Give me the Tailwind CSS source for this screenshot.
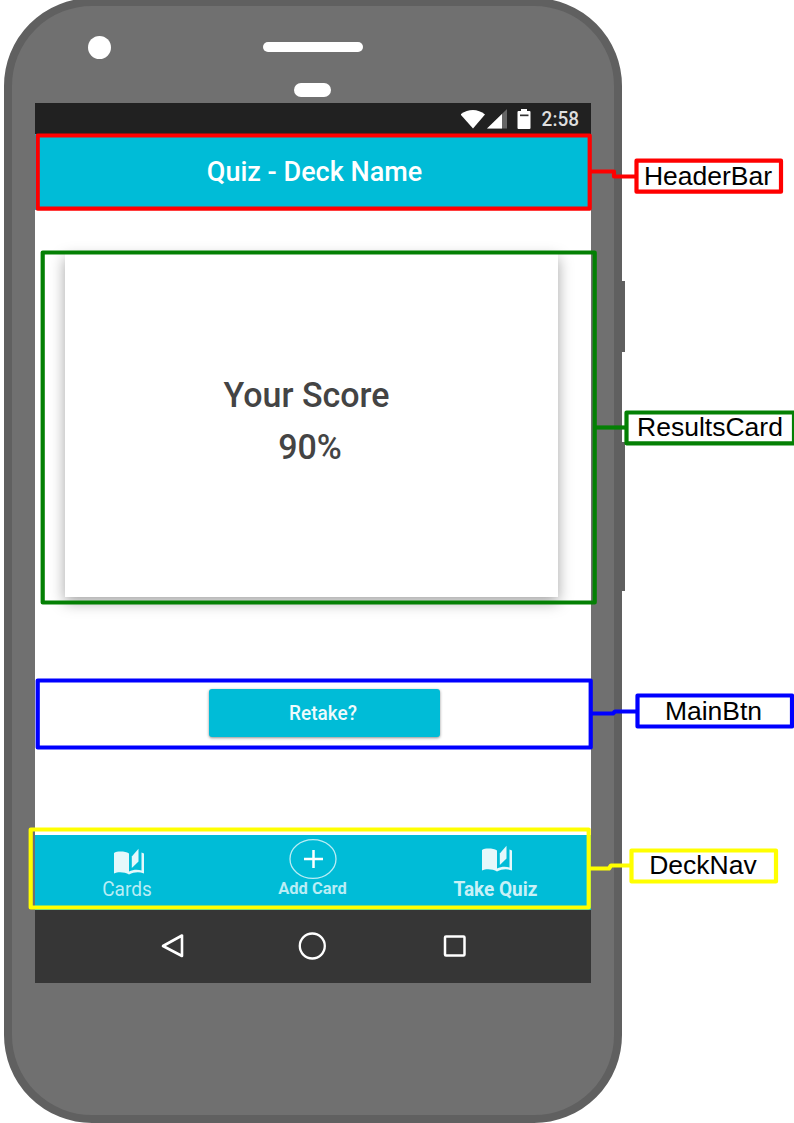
<!DOCTYPE html>
<html lang="en">
<head>
<meta charset="utf-8">
<title>Quiz results component map</title>
<script src="https://cdn.jsdelivr.net/npm/@tailwindcss/browser@4"></script>
</head>
<body class="bg-white overflow-hidden">
<main class="relative w-[794px] h-[1123px] overflow-hidden font-['Roboto',sans-serif]">
  <!-- side buttons -->
  <div class="absolute left-[610px] top-[281px] w-[15px] h-[71px] bg-[#606060]"></div>
  <div class="absolute left-[610px] top-[442px] w-[15px] h-[149px] bg-[#606060]"></div>

  <!-- phone body -->
  <section class="relative ml-1 -mt-[2px] w-[618px] h-[1125px] rounded-[88px] bg-[#707070] border-8 border-[#606060] flex flex-col">
    <div class="h-[97px] shrink-0 relative">
      <div class="absolute left-[76px] top-[30px] size-[23px] rounded-full bg-white"></div>
      <div class="absolute left-[251px] top-[36px] w-[100px] h-[10px] rounded-full bg-white"></div>
      <div class="absolute left-[282px] top-[77px] w-[37px] h-[14px] rounded-full bg-white"></div>
    </div>
    <div class="ml-[23px] w-[556px] h-[880px] bg-white flex flex-col shrink-0">
      <div class="h-[31px] bg-[#212121] flex items-center justify-end pr-[12px] shrink-0">
        <svg class="w-[80px] h-[31px] mr-px shrink-0" viewBox="0 0 80 31">
          <path d="M-.5 11.500C7 5.500 17 5.500 24 11.500L12 25.500Z" fill="#fff"/>
          <path d="M46 6V25.500H26Z" fill="#666"/>
          <path d="M41 10.900V25.500H26Z" fill="#fff"/>
          <path d="M60 6h6v2h2.500q1 0 1 1v16q0 1-1 1H57.500q-1 0-1-1V9q0-1 1-1h2.500Z" fill="#fff"/>
          <path d="M59 11.500h8.500v1.700h-8.500Z" fill="#333"/>
        </svg>
        <span class="text-[19px] leading-[31px] pt-px font-medium text-[#dedede] scale-y-105">2:58</span>
      </div>
      <header class="h-[76px] shrink-0 bg-[#00bcd7] flex items-center justify-center pl-[3px]">
        <h1 class="text-[27px] leading-[34px] font-medium text-white">Quiz - Deck Name</h1>
      </header>
      <div class="pt-[43px] pl-[30px] h-[470px] shrink-0">
        <div class="w-[493px] h-[344px] bg-white shadow-[0_5px_14px_rgba(0,0,0,0.36)] flex flex-col items-center pt-[115px] text-[34px] leading-[52px] font-medium text-[#444]">
          <p class="-ml-[10px] scale-y-105">Your Score</p>
          <p class="-ml-[3px] scale-y-105">90%</p>
        </div>
      </div>
      <div class="pt-[9px] pl-[174px] h-[155px] shrink-0">
        <button class="block w-[231px] h-[48px] rounded-[3px] bg-[#00bcd7] shadow-[0_1px_3px_rgba(0,0,0,0.45)] text-[19px] leading-[48px] font-medium text-[#effbfd]"><span class="inline-block -ml-[3px] pt-px scale-y-105">Retake?</span></button>
      </div>
      <nav class="h-[75px] shrink-0 bg-[#00bcd7] flex text-[#b9edf5]">
        <div class="w-[184px] flex flex-col items-center pt-[13px]">
          <svg class="w-[32px] h-[27px] ml-[3px]" viewBox="0 0 32 27" fill="#e5f8fb"><path d="M1 5C4 3 12 3 16 5.500V23.500C20 21.500 25 21.500 28.500 22.500V4.500L31 5.500V25.500C26 23.500 21 24 16 26.500C12 24 5 23.500 1 25.500Z"/><path d="M18.800 8.500L25.500 .8V13.500L18.800 20Z"/></svg>
          <span class="text-[19px] leading-[26px] mt-px scale-y-110">Cards</span>
        </div>
        <div class="w-[185px] ml-px flex flex-col items-center pt-[3px]">
          <svg class="w-[48px] h-[42px]" viewBox="0 0 48 42" fill="none"><ellipse cx="24" cy="21" rx="23" ry="19.300" stroke="#b9edf5" stroke-width="1.300"/><path d="M15 21H34M24.500 12V30" stroke="#fff" stroke-width="2.500"/></svg>
          <span class="text-[16.500px] leading-[20px] font-bold -mt-[1px] scale-y-105">Add Card</span>
        </div>
        <div class="w-[181px] flex flex-col items-center pt-[10px]">
          <svg class="w-[32px] h-[27px] ml-[3px]" viewBox="0 0 32 27" fill="#e5f8fb"><path d="M1 5C4 3 12 3 16 5.500V23.500C20 21.500 25 21.500 28.500 22.500V4.500L31 5.500V25.500C26 23.500 21 24 16 26.500C12 24 5 23.500 1 25.500Z"/><path d="M18.800 8.500L25.500 .8V13.500L18.800 20Z"/></svg>
          <span class="text-[19px] leading-[26px] font-bold mt-[5px] text-[#c8f1f7] scale-y-105">Take Quiz</span>
        </div>
      </nav>
      <svg class="h-[73px] w-[556px] shrink-0 bg-[#363636]" viewBox="0 0 556 73" fill="none" stroke="#fff">
        <path d="M128 36L147 25.500V46Z" stroke-width="2.600" stroke-linejoin="round"/>
        <circle cx="277.300" cy="36" r="12.500" stroke-width="2.300"/>
        <rect x="410" y="26.500" width="19.500" height="19" rx="1" stroke-width="2.500"/>
      </svg>
    </div>
  </section>

  <!-- component outlines and connectors -->
  <svg class="absolute inset-0" width="794" height="1123" viewBox="0 0 794 1123" fill="none" stroke-width="4.200" stroke-linejoin="round">
    <g stroke="#f00"><rect x="37.700" y="135.500" width="552" height="73.200"/><path d="M590 171.500H614V176.500H636"/><rect x="636.500" y="160.700" width="144.500" height="31" fill="#fff"/></g>
    <g stroke="#048004"><rect x="42.700" y="252.500" width="552" height="350"/><path d="M595 427.500H626"/><rect x="626.500" y="412.500" width="167.500" height="30.800" fill="#fff"/></g>
    <g stroke="#00f"><rect x="37.700" y="680.500" width="553" height="67"/><path d="M591 713.500H613L615 711.500H637"/><rect x="637.500" y="695.500" width="154.500" height="31" fill="#fff"/></g>
    <g stroke="#ff0"><rect x="30.700" y="829.500" width="558" height="78"/><path d="M589 868.500H609L611 865.500H631"/><rect x="631.500" y="850.500" width="144.500" height="31" fill="#fff"/></g>
  </svg>
  <div class="font-['Liberation_Sans',sans-serif] text-[26.500px] leading-[30px] text-black text-center">
    <span class="absolute left-[636px] top-[161px] w-[144px]">HeaderBar</span>
    <span class="absolute left-[626px] top-[412px] w-[168px]">ResultsCard</span>
    <span class="absolute left-[636px] top-[696px] w-[155px]">MainBtn</span>
    <span class="absolute left-[631px] top-[850px] w-[144px]">DeckNav</span>
  </div>
</main>
</body>
</html>
